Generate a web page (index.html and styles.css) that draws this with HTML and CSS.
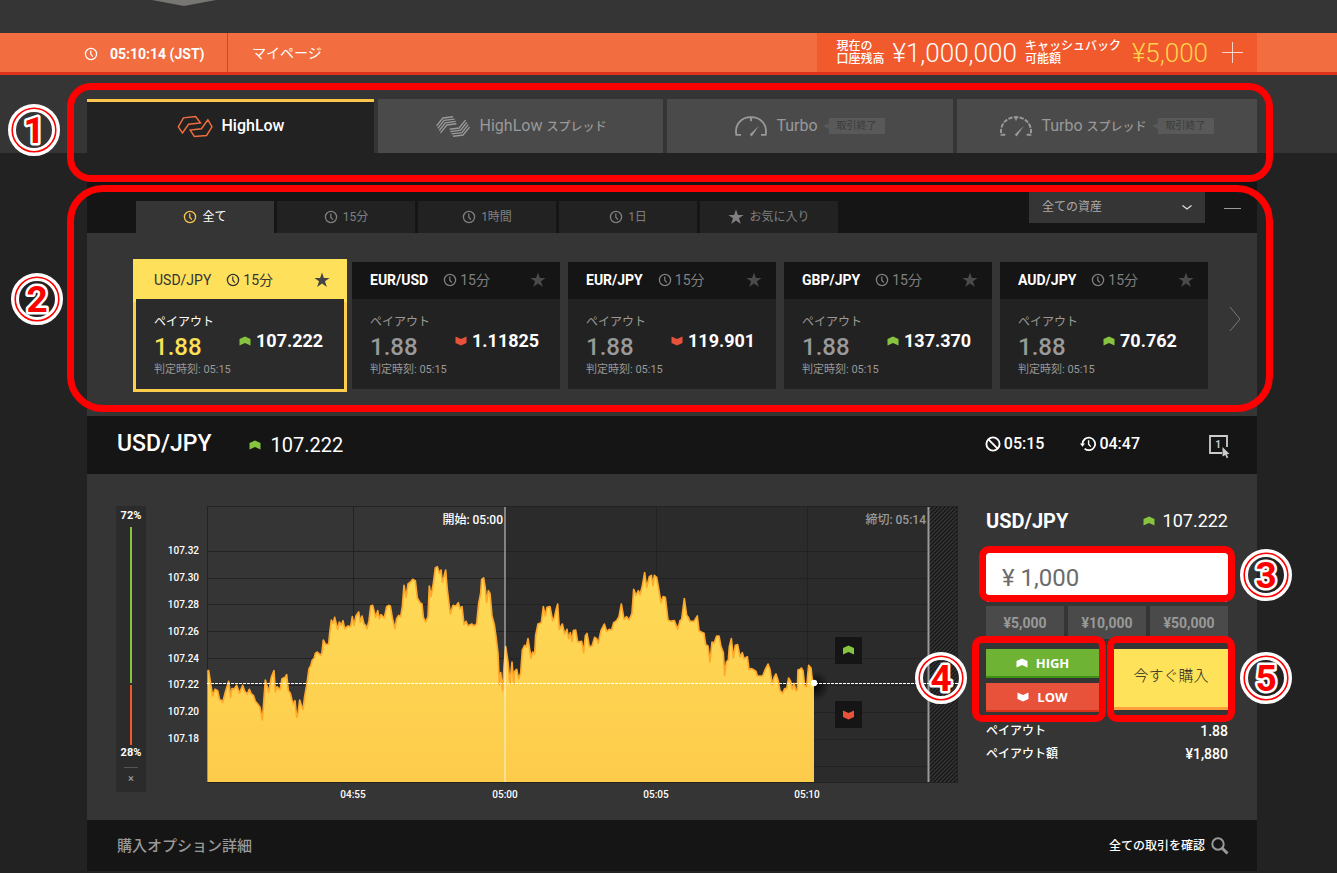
FILE: index.html
```html
<!DOCTYPE html>
<html lang="ja">
<head>
<meta charset="utf-8">
<title>HighLow</title>
<link rel="stylesheet" href="styles.css">
</head>
<body>
<svg class="defs" aria-hidden="true">
  <symbol id="clock" viewBox="0 0 14 14"><circle cx="7" cy="7" r="5.6" fill="none" stroke="currentColor" stroke-width="1.3"/><path d="M6.8 3.6V7.2L8.8 9.6" fill="none" stroke="currentColor" stroke-width="1.2"/></symbol>
  <symbol id="star" viewBox="0 0 16 16"><path d="M8 0.5L9.9 5.9H15.6L11 9.3L12.8 15L8 11.6L3.2 15L5 9.3L0.4 5.9H6.1Z" fill="currentColor"/></symbol>
  <symbol id="up" viewBox="0 0 12 10"><path d="M0.5 3L6 0.5L11.5 3V9.5L6 7L0.5 9.5Z" fill="currentColor"/></symbol>
  <symbol id="down" viewBox="0 0 12 10"><path d="M0.5 0.5L6 3L11.5 0.5V7L6 9.5L0.5 7Z" fill="currentColor"/></symbol>
  <symbol id="badge-ring" viewBox="0 0 52 52"><circle cx="26" cy="26" r="22" fill="none" stroke="#fff" stroke-width="8"/><circle cx="26" cy="26" r="21.8" fill="none" stroke="#f00" stroke-width="1.6"/></symbol>
  <linearGradient id="area-fill" x1="0" y1="0" x2="0" y2="1"><stop offset="0" stop-color="#fedb57"/><stop offset="1" stop-color="#fecb4b"/></linearGradient>
  <radialGradient id="dot-shadow"><stop offset="0" stop-color="#000" stop-opacity=".85"/><stop offset=".4" stop-color="#000" stop-opacity=".5"/><stop offset="1" stop-color="#000" stop-opacity="0"/></radialGradient>
  <pattern id="hatch" width="4" height="4" patternUnits="userSpaceOnUse"><rect width="4" height="4" fill="#333"/><path d="M-1 1L1 -1M0 4L4 0M3 5L5 3" stroke="#111" stroke-width="1.2"/></pattern>
  <clipPath id="plot"><rect x="22" y="20" width="1820" height="826"/></clipPath>
</svg>

<div class="top"><svg class="top-arrow" viewBox="0 0 64 6" aria-hidden="true"><path d="M0 0H64L32 6Z" fill="#777672"/></svg></div>

<header class="bar">
  <div class="wrap bar-row">
    <div class="time"><svg class="i14"><use href="#clock"/></svg><span>05:10:14 (JST)</span></div>
    <a class="mypage" href="#">マイページ</a>
    <div class="balance">
      <span class="bal-label">現在の<br>口座残高</span>
      <span class="bal-value">¥1,000,000</span>
      <span class="bal-label">キャッシュバック<br>可能額</span>
      <span class="bal-value cash">¥5,000</span>
      <button class="plus" aria-label="入金"><svg viewBox="0 0 21 21"><path d="M10.5 0V21M0 10.5H21" stroke="currentColor" stroke-opacity=".75" stroke-width="1"/></svg></button>
    </div>
  </div>
</header>

<div class="product-band">
  <nav class="wrap products">
    <a class="product on" href="#"><svg class="p-icon" viewBox="526 343 112 70"><path d="M530 379L546 351L584 347L599 367L562 371L543 398ZM635 379L622 357L602 385L567 389L580 409L618 406Z" fill="none" stroke="#f26d40" stroke-width="4.5"/></svg><span>HighLow</span></a>
    <a class="product" href="#"><svg class="p-icon" viewBox="42 102 118 72"><g fill="none" stroke="#999" stroke-width="4.5"><path id="waves" d="M47 136L68 110L101 106M51 144L72 118L106 114M56 151L76 126L110 121M60 159L81 133L112 129"/><use href="#waves" transform="rotate(180 101 138)"/></g></svg><span>HighLow <small>スプレッド</small></span></a>
    <a class="product" href="#"><svg class="p-icon meter" viewBox="944 104 96 68"><path d="M962 163H948C942 130 965 110 992 110S1042 130 1036 163H1022M992 110V122" fill="none" stroke="#999" stroke-width="5.5"/><path d="M1016 136L988 162L994 168Z" fill="#999"/></svg><span>Turbo</span><span class="closed">取引終了</span></a>
    <a class="product" href="#"><svg class="p-icon meter" viewBox="944 104 96 68"><path d="M960 163H948C942 130 965 110 992 110S1042 130 1036 163H1024" fill="none" stroke="#999" stroke-width="6" stroke-dasharray="13 4"/><path d="M986 108H998L992 122ZM1016 136L988 162L994 168Z" fill="#999"/></svg><span>Turbo <small>スプレッド</small></span><span class="closed">取引終了</span></a>
    <div class="frame frame-products"></div>
    <svg class="badge badge-1" viewBox="0 0 52 52"><use href="#badge-ring"/><text x="26" y="39">1</text></svg>
  </nav>
</div>

<main class="wrap">
  <section class="assets">
    <div class="filters">
      <div class="filter-tabs">
        <button class="filter on"><svg class="i14"><use href="#clock"/></svg>全て</button>
        <button class="filter"><svg class="i14"><use href="#clock"/></svg>15分</button>
        <button class="filter"><svg class="i14"><use href="#clock"/></svg>1時間</button>
        <button class="filter"><svg class="i14"><use href="#clock"/></svg>1日</button>
        <button class="filter"><svg class="i16"><use href="#star"/></svg>お気に入り</button>
      </div>
      <div class="select-box">
        <select aria-label="資産"><option>全ての資産</option></select>
        <svg class="caret" viewBox="0 0 10 5"><path d="M0.5 0.5L5 4L9.5 0.5" fill="none" stroke="#ddd" stroke-width="1.3"/></svg>
      </div>
      <button class="collapse" aria-label="閉じる"></button>
    </div>
    <div class="carousel">
      <div class="cards">
        <article class="card on">
          <header><b>USD/JPY</b><svg class="i14"><use href="#clock"/></svg><span>15分</span><svg class="i16 fav"><use href="#star"/></svg></header>
          <div class="card-body"><div><p class="c-label">ペイアウト</p><p class="c-rate">1.88</p><p class="c-time">判定時刻: 05:15</p></div><p class="c-price"><svg class="arrow green"><use href="#up"/></svg>107.222</p></div>
        </article>
        <article class="card">
          <header><b>EUR/USD</b><svg class="i14"><use href="#clock"/></svg><span>15分</span><svg class="i16 fav"><use href="#star"/></svg></header>
          <div class="card-body"><div><p class="c-label">ペイアウト</p><p class="c-rate">1.88</p><p class="c-time">判定時刻: 05:15</p></div><p class="c-price"><svg class="arrow red"><use href="#down"/></svg>1.11825</p></div>
        </article>
        <article class="card">
          <header><b>EUR/JPY</b><svg class="i14"><use href="#clock"/></svg><span>15分</span><svg class="i16 fav"><use href="#star"/></svg></header>
          <div class="card-body"><div><p class="c-label">ペイアウト</p><p class="c-rate">1.88</p><p class="c-time">判定時刻: 05:15</p></div><p class="c-price"><svg class="arrow red"><use href="#down"/></svg>119.901</p></div>
        </article>
        <article class="card">
          <header><b>GBP/JPY</b><svg class="i14"><use href="#clock"/></svg><span>15分</span><svg class="i16 fav"><use href="#star"/></svg></header>
          <div class="card-body"><div><p class="c-label">ペイアウト</p><p class="c-rate">1.88</p><p class="c-time">判定時刻: 05:15</p></div><p class="c-price"><svg class="arrow green"><use href="#up"/></svg>137.370</p></div>
        </article>
        <article class="card">
          <header><b>AUD/JPY</b><svg class="i14"><use href="#clock"/></svg><span>15分</span><svg class="i16 fav"><use href="#star"/></svg></header>
          <div class="card-body"><div><p class="c-label">ペイアウト</p><p class="c-rate">1.88</p><p class="c-time">判定時刻: 05:15</p></div><p class="c-price"><svg class="arrow green"><use href="#up"/></svg>70.762</p></div>
        </article>
      </div>
      <button class="next" aria-label="次へ"><svg viewBox="0 0 12 26"><path d="M1 1L11 13L1 25" fill="none" stroke="#777" stroke-width="1"/></svg></button>
    </div>
    <div class="frame frame-assets"></div>
    <svg class="badge badge-2" viewBox="0 0 52 52"><use href="#badge-ring"/><text x="26" y="39">2</text></svg>
  </section>

  <section class="instrument">
    <h1>USD/JPY</h1>
    <p class="live"><svg class="arrow green"><use href="#up"/></svg>107.222</p>
    <p class="stat"><svg class="i16" viewBox="0 0 16 16"><g fill="none" stroke="#fff" stroke-width="1.9"><circle cx="8" cy="8" r="6.6"/><path d="M3.4 3.4L12.6 12.6"/></g></svg>05:15</p>
    <p class="stat"><svg class="i16" viewBox="0 0 16 16"><g fill="none" stroke="#fff" stroke-width="1.7"><path d="M2.5 8A6.3 6.3 0 1 1 4.6 12.6"/><path d="M8.6 4.2V8.2L10.8 10.6" stroke-width="1.4"/></g><path d="M0 7.5H5L2.5 10.8Z" fill="#fff"/></svg>04:47</p>
    <button class="oneclick" aria-label="ワンクリック"><svg viewBox="0 0 22 24"><path d="M18 12V1H1V18H13" fill="none" stroke="#ccc" stroke-width="1.8"/><path d="M13.500 12L20.500 19L17.700 19.200L19.300 22.600L17.800 23.300L16.200 19.900L13.500 21.500Z" fill="#ccc"/><text x="9" y="13" class="one">1</text></svg></button>
  </section>

  <section class="trade">
    <div class="gauge">
      <span>72%</span>
      <i class="g-up"></i>
      <i class="g-down"></i>
      <span>28%</span>
      <button aria-label="閉じる">×</button>
    </div>
    <svg class="chart" viewBox="146 506 812 314" role="img" aria-label="USD/JPY">
      <rect x="505" y="507" width="423" height="275" fill="#2b2b2b"/>
      <rect x="929" y="507" width="29" height="275" fill="url(#hatch)"/>
      <g stroke="#222" stroke-width="1">
        <path d="M207 506.500H958M207 551.500H928M207 578.500H928M207 604.500H928M207 631.500H928M207 658.500H928M207 685.500H928M207 712.500H928M207 739.500H928M207 766.500H928M207 782.500H958"/>
        <path d="M207.500 507V782M353.500 507V782M656.500 507V782M807.500 507V782M957.500 507V782"/>
      </g>
      <g class="y-axis"><text x="199" y="554">107.32</text><text x="199" y="581">107.30</text><text x="199" y="608">107.28</text><text x="199" y="635">107.26</text><text x="199" y="662">107.24</text><text x="199" y="688">107.22</text><text x="199" y="715">107.20</text><text x="199" y="742">107.18</text></g>
      <g class="x-axis"><text x="353" y="798">04:55</text><text x="505" y="798">05:00</text><text x="656" y="798">05:05</text><text x="807" y="798">05:10</text></g>
      <circle cx="815" cy="686" r="15" fill="url(#dot-shadow)"/>
      <g transform="translate(200 500) scale(.33333)" clip-path="url(#plot)">
        <path fill="url(#area-fill)" stroke="#ffa92c" stroke-width="5" stroke-linejoin="round" d="M12 860V512L26 512L31 545L38 588L45 568L53 572L59 600L64 600L68 608L75 580L86 544L92 592L96 566L102 568L110 556L118 580L128 556L134 574L142 582L148 568L154 582L160 586L166 604L173 612L180 622L187 660L191 610L196 540L206 576L214 532L222 512L226 576L231 560L240 570L246 536L255 532L260 524L265 572L271 580L276 600L280 612L285 602L290 652L294 640L299 600L304 616L309 628L314 590L321 550L327 506L332 498L337 480L343 474L346 460L352 456L362 466L366 458L370 420L377 434L386 432L389 400L394 360L400 370L404 352L413 388L418 366L424 376L429 362L434 386L444 378L452 380L457 350L462 376L468 348L476 336L481 366L486 348L492 372L497 376L501 386L507 362L512 318L518 316L527 352L533 332L538 356L543 344L553 354L560 320L566 316L571 318L577 354L585 386L590 356L596 346L602 350L607 320L612 256L618 292L624 252L632 246L638 238L646 242L652 294L660 308L666 312L670 352L677 366L684 350L688 258L693 290L700 250L706 204L712 200L718 220L723 210L727 246L732 230L737 210L742 270L751 342L759 316L768 318L775 308L780 326L786 320L792 374L798 364L804 378L815 372L822 378L830 372L836 310L842 280L845 238L851 234L856 266L860 308L865 272L870 280L876 348L883 374L888 410L894 460L898 555L902 518L908 572L912 500L917 440L924 486L930 550L936 486L941 552L944 514L950 508L956 536L962 520L967 450L974 436L979 440L984 416L993 474L998 456L1004 462L1007 406L1014 372L1024 368L1030 320L1036 348L1041 322L1050 320L1058 362L1063 354L1068 330L1073 312L1078 388L1087 372L1094 402L1101 388L1106 416L1111 398L1116 424L1120 392L1127 390L1133 426L1145 424L1151 458L1156 408L1161 400L1168 440L1176 438L1184 412L1190 416L1195 430L1203 392L1213 372L1220 394L1228 388L1235 390L1241 368L1250 362L1257 350L1264 312L1272 358L1280 350L1287 360L1296 340L1301 268L1308 286L1315 272L1320 284L1326 262L1334 218L1340 262L1348 230L1354 226L1359 256L1363 226L1370 232L1374 254L1383 308L1389 290L1396 292L1404 360L1412 364L1423 362L1433 388L1440 362L1445 358L1453 296L1460 346L1465 352L1470 364L1482 364L1492 348L1497 392L1504 396L1512 400L1517 434L1524 438L1530 486L1536 426L1542 430L1550 408L1557 408L1563 440L1570 458L1574 526L1579 486L1585 480L1588 440L1594 416L1600 474L1606 436L1613 434L1620 470L1627 458L1632 476L1642 470L1647 508L1655 506L1662 510L1668 514L1672 528L1688 528L1696 508L1704 492L1710 508L1717 554L1723 530L1728 522L1734 540L1740 572L1748 580L1754 566L1760 566L1766 534L1772 544L1777 568L1782 550L1788 572L1792 570L1794 510L1800 508L1804 504L1809 512L1814 556L1820 560L1826 496L1833 504L1837 540L1842 549H1852V860Z"/>
      </g>
      <path d="M505 507V782" stroke="#fff" stroke-opacity=".4" stroke-width="2"/>
      <path d="M928.500 507V782" stroke="#999" stroke-width="2"/>
      <path d="M207 683.500H958" stroke="#fff" stroke-width="1" stroke-dasharray="3 1"/>
      <circle cx="814" cy="683" r="3.200" fill="#fff"/>
      <text class="mark-label" x="503" y="524">開始: 05:00</text>
      <text class="mark-label dim" x="926" y="524">締切: 05:14</text>
      <rect x="835" y="637" width="27" height="27" fill="#151515"/><use href="#up" x="842" y="645" width="13" height="10" color="#86c440"/>
      <rect x="835" y="701" width="27" height="27" fill="#151515"/><use href="#down" x="842" y="710" width="13" height="10" color="#e8513a"/>
    </svg>
    <form class="ticket">
      <div class="t-head"><h2>USD/JPY</h2><p class="t-price"><svg class="arrow green"><use href="#up"/></svg>107.222</p></div>
      <div class="amount"><input type="text" value="¥ 1,000" aria-label="購入額"><div class="frame frame-amount"></div><svg class="badge badge-3" viewBox="0 0 52 52"><use href="#badge-ring"/><text x="26" y="39">3</text></svg></div>
      <div class="presets"><button type="button">¥5,000</button><button type="button">¥10,000</button><button type="button">¥50,000</button></div>
      <div class="actions">
        <div class="direction">
          <button type="button" class="high"><svg class="arrow"><use href="#up"/></svg>HIGH</button>
          <button type="button" class="low"><svg class="arrow"><use href="#down"/></svg>LOW</button>
          <div class="frame frame-action"></div>
          <svg class="badge badge-4" viewBox="0 0 52 52"><use href="#badge-ring"/><text x="26" y="39">4</text></svg>
        </div>
        <div class="purchase">
          <button type="button" class="buy">今すぐ購入</button>
          <div class="frame frame-action"></div>
          <svg class="badge badge-5" viewBox="0 0 52 52"><use href="#badge-ring"/><text x="26" y="39">5</text></svg>
        </div>
      </div>
      <dl class="payout"><dt>ペイアウト</dt><dd>1.88</dd><dt>ペイアウト額</dt><dd>¥1,880</dd></dl>
    </form>
  </section>

  <section class="history">
    <h3>購入オプション詳細</h3>
    <a href="#">全ての取引を確認<svg viewBox="0 0 18 18"><g fill="none" stroke="#999"><circle cx="7" cy="7" r="5.700" stroke-width="2"/><path d="M11 11L16.500 16.500" stroke-width="3"/></g></svg></a>
  </section>
</main>
</body>
</html>
```

FILE: styles.css
```css
* { box-sizing: border-box; }
body {
  margin: 0;
  background: #222;
  color: #fff;
  font-family: Roboto, "Noto Sans CJK JP", sans-serif;
  font-size: 12px;
  line-height: 16px;
}
h1, h2, h3, p, dl, dd { margin: 0; }
a { color: inherit; text-decoration: none; }
button { padding: 0; border: 0; background: none; color: inherit; font: inherit; cursor: pointer; }
svg { display: block; flex: none; }
.defs { position: absolute; width: 0; height: 0; }
.wrap { margin: 0 80px 0 87px; }
.i14 { width: 14px; height: 14px; }
.i16 { width: 16px; height: 16px; }
.arrow { width: 12px; height: 10px; }
.green { color: #86c440; }
.red { color: #e8513a; }

.top { height: 33px; background: #353535; }
.top-arrow { width: 64px; height: 6px; margin-left: 152px; }

.bar { background: #f26d40; border-bottom: 3px solid #e0331b; }
.bar-row { display: flex; align-items: stretch; height: 39px; }
.time {
  display: flex; align-items: center; gap: 12px;
  width: 144px; margin-left: -3px; padding-top: 3px;
  border-right: 1px solid #e0401b;
  font-size: 14px; font-weight: 700;
}
.mypage { padding: 12px 24px 0; font-size: 14px; }
.balance {
  display: flex; align-items: center;
  margin-left: auto; padding: 0 14px 0 20px;
  background: #f15a2d;
}
.bal-label { font-size: 12px; font-weight: 500; line-height: 13px; }
.bal-value { margin: 0 8px; font-size: 26px; font-weight: 300; }
.bal-value.cash { margin: 0 14px 0 11px; color: #fdd64c; }
.plus svg { width: 21px; height: 21px; }

.product-band { background: #353535; padding-top: 24px; }
.products {
  position: relative;
  display: grid; grid-template-columns: 287fr 285fr 286fr 300fr; gap: 4px;
}
.product {
  display: flex; align-items: center; justify-content: center; gap: 9px;
  height: 54px;
  background: #4a4a4a; color: #999;
  font-size: 16px;
}
.product.on { padding-bottom: 3px; background: #222; color: #fff; border-top: 3px solid #fdc64a; font-weight: 500; }
.product small { font-size: 12px; font-weight: 500; }
.p-icon { width: 36px; height: 23px; }
.p-icon.meter { width: 32px; }
.closed {
  position: relative; margin-left: 2px; padding: 0 8px;
  background: #595959; color: #3c3c3c; font-size: 10px; line-height: 16px;
}
.closed::before {
  content: ""; position: absolute; left: -6px; top: 5px;
  border: 3px solid transparent; border-right-color: #595959; border-left: 0; border-right-width: 6px;
}

.frame { position: absolute; border: 7px solid #f00; pointer-events: none; z-index: 2; }
.frame-products { inset: -16px -16px -29px -20px; border-radius: 24px; }
.frame-assets { inset: 3px -16px 4px -20px; border-radius: 36px; }
.frame-amount { inset: -7px -7px 0 -7px; border-radius: 10px; }
.frame-action { inset: -13px -7px -10px -14px; border-radius: 10px; }
.purchase .frame-action { inset: -13px -7px -10px -7px; }
.badge { position: absolute; width: 52px; height: 52px; z-index: 3; }
.badge text {
  font-family: "Liberation Sans Narrow", Roboto, sans-serif;
  font-size: 37px; font-weight: 700; text-anchor: middle;
  fill: #f00; stroke: #fff; stroke-width: 5px; stroke-linejoin: round; paint-order: stroke;
}
.badge-1 { left: -79px; top: 5px; }
.badge-2 { left: -76px; top: 91px; }
.badge-3 { right: -64px; top: -4px; }
.badge-4 { left: -71px; top: 3px; }
.badge-5 { right: -64px; top: 3px; }

.assets { position: relative; margin-top: 29px; background: #353535; }
.filters { display: flex; align-items: flex-end; height: 51px; padding: 0 16px 0 49px; background: #151515; }
.filter-tabs { display: flex; gap: 3px; }
.filter {
  display: flex; align-items: center; justify-content: center; gap: 5px;
  width: 138px; height: 32px;
  background: #222; color: #808080; font-size: 12px;
}
.filter.on { background: #353535; color: #fff; }
.filter.on svg { color: #fdc64a; }
.select-box { position: relative; align-self: flex-start; width: 176px; height: 32px; margin: 9px 19px 0 auto; }
.select-box select {
  width: 100%; height: 100%; padding: 0 13px;
  appearance: none; border: 0; border-radius: 0;
  background: #353535; color: #aaa; font: inherit;
}
.caret { position: absolute; right: 13px; top: 14px; width: 10px; height: 5px; }
.collapse { width: 17px; height: 1px; margin-bottom: 24px; background: #999; }

.carousel { display: flex; align-items: center; padding: 29px 0 27px 49px; }
.cards { flex: 1; display: grid; grid-template-columns: repeat(5, 1fr); gap: 8px; }
.next { width: 49px; padding-left: 21px; margin-top: -13px; }
.next svg { width: 12px; height: 26px; }
.card { background: #222; }
.card header {
  display: flex; align-items: center;
  height: 37px; padding: 0 14px 2px 18px;
  background: #151515; color: #808080; font-size: 14px;
}
.card header b { color: #fff; font-weight: 700; margin-right: 15px; }
.card header span { margin-left: 3px; }
.fav { margin-left: auto; color: #4a4a4a; }
.card-body {
  position: relative;
  display: grid; grid-template-columns: 85px 1fr;
  height: 90px; padding: 13px 0 0 18px;
  background: #222; color: #999;
}
.c-label { font-size: 12px; line-height: 20px; }
.c-rate { font-size: 24px; font-weight: 500; line-height: 30px; }
.c-time { font-size: 11px; line-height: 16px; white-space: nowrap; }
.c-price {
  display: flex; align-items: center; gap: 5px; padding-bottom: 19px;
  color: #fff; font-size: 18px; font-weight: 700; line-height: 20px;
}
.card.on { box-shadow: 0 0 0 3px #fdce4c; }
.card.on header { background: #fee05a; color: #333; box-shadow: 0 0 0 3px #fee05a; }
.card.on header b { color: #333; font-weight: 400; }
.card.on .fav { color: #444; }
.card.on .card-body { background: #2b2b2b; }
.card.on .c-label { color: #fff; }
.card.on .c-rate { color: #fde056; }

.instrument { display: flex; align-items: center; height: 58px; padding: 0 26px 2px 30px; background: #151515; }
.instrument h1 { font-size: 23px; font-weight: 500; }
.live { display: flex; align-items: center; gap: 9px; margin: 2px auto 0 38px; font-size: 20px; }
.stat { display: flex; align-items: center; gap: 3px; margin-right: 36px; font-size: 16px; font-weight: 500; }
.oneclick { margin: 6px 0 0 33px; }
.oneclick svg { width: 22px; height: 24px; }
.one { font-size: 10px; font-weight: 700; text-anchor: middle; fill: #ccc; }

.trade {
  display: grid; grid-template-columns: 30px 1fr 242px; column-gap: 0;
  padding: 32px 29px 0; background: #353535;
}
.gauge {
  display: flex; flex-direction: column; align-items: center;
  height: 286px; padding-top: 2px;
  background: #2b2b2b; font-size: 11px; font-weight: 700;
}
.gauge i { width: 2px; }
.g-up { flex: 72; margin-top: 3px; background: #86c440; }
.g-down { flex: 28; margin-top: 2px; background: #f1592d; }
.gauge button { width: 14px; margin-top: 6px; padding: 3px 0 5px; border-top: 1px solid #555; color: #aaa; font-weight: 400; }
.chart { width: calc(100% - 28px); height: auto; }
.y-axis, .x-axis { fill: #fff; font-size: 10px; font-weight: 500; }
.y-axis { text-anchor: end; }
.x-axis { text-anchor: middle; }
.mark-label { fill: #fff; font-size: 12px; font-weight: 500; text-anchor: end; }
.dim { fill: #999; }

.t-head { display: flex; align-items: center; justify-content: space-between; height: 30px; }
.t-head h2 { font-size: 20px; font-weight: 700; }
.t-price { display: flex; align-items: center; gap: 8px; font-size: 18px; }
.amount { position: relative; margin-top: 17px; }
.amount input {
  display: block; width: 100%; height: 49px; padding: 0 16px;
  border: 0; border-radius: 3px;
  background: #fff; color: #6b6b6b; font: 400 24px Roboto, sans-serif;
}
.presets { display: grid; grid-template-columns: repeat(3, 1fr); gap: 4px; margin-top: 4px; }
.presets button { height: 33px; background: #4a4a4a; color: #999; font-size: 14px; font-weight: 700; }
.actions { display: grid; grid-template-columns: 113px 114px; justify-content: space-between; margin-top: 10px; }
.direction { position: relative; display: grid; gap: 5px; }
.purchase { position: relative; }
.high, .low {
  display: flex; align-items: center; justify-content: center; gap: 8px;
  height: 29px; font: 700 13px "Open Sans", sans-serif;
}
.high { background: #6eb333; border-bottom: 2px solid #3f8f16; }
.low { background: #e8513a; border-bottom: 2px solid #d9301a; }
.buy {
  width: 100%; height: 61px; padding-bottom: 4px;
  background: #fee25a; border-bottom: 3px solid #fba03a;
  color: #222; font-size: 15px; font-weight: 300;
}
.payout { display: grid; grid-template-columns: 1fr auto; margin-top: 8px; line-height: 23px; }
.payout dt { font-weight: 500; }
.payout dd { font-size: 14px; font-weight: 500; text-align: right; }

.history {
  display: flex; align-items: center; justify-content: space-between;
  height: 51px; padding: 0 28px 0 30px;
  background: #151515; box-shadow: 0 2px 0 #353535;
}
.history h3 { color: #999; font-size: 15px; font-weight: 500; }
.history a { display: flex; align-items: center; gap: 6px; font-weight: 500; }
.history svg { width: 18px; height: 18px; }
```
